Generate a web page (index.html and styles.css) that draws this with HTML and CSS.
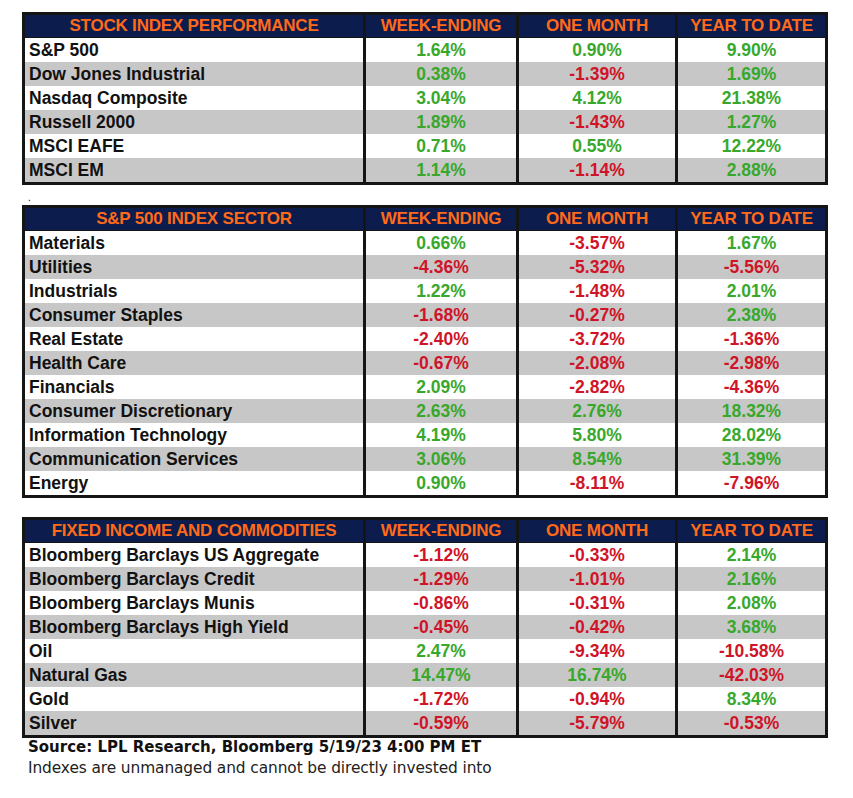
FILE: index.html
```html
<!DOCTYPE html>
<html>
<head>
<meta charset="utf-8">
<link rel="stylesheet" href="styles.css">
</head>
<body>
<div class="page">
  <table class="tbl">
    <colgroup><col class="c1"><col class="c2"><col class="c3"><col class="c4"></colgroup>
    <thead>
      <tr><th>STOCK INDEX PERFORMANCE</th><th>WEEK-ENDING</th><th>ONE MONTH</th><th>YEAR TO DATE</th></tr>
    </thead>
    <tbody>
      <tr><td>S&amp;P 500</td><td class="up">1.64%</td><td class="up">0.90%</td><td class="up">9.90%</td></tr>
      <tr><td>Dow Jones Industrial</td><td class="up">0.38%</td><td class="dn">-1.39%</td><td class="up">1.69%</td></tr>
      <tr><td>Nasdaq Composite</td><td class="up">3.04%</td><td class="up">4.12%</td><td class="up">21.38%</td></tr>
      <tr><td>Russell 2000</td><td class="up">1.89%</td><td class="dn">-1.43%</td><td class="up">1.27%</td></tr>
      <tr><td>MSCI EAFE</td><td class="up">0.71%</td><td class="up">0.55%</td><td class="up">12.22%</td></tr>
      <tr><td>MSCI EM</td><td class="up">1.14%</td><td class="dn">-1.14%</td><td class="up">2.88%</td></tr>
    </tbody>
  </table>
  <div class="dot">.</div>
  <table class="tbl">
    <colgroup><col class="c1"><col class="c2"><col class="c3"><col class="c4"></colgroup>
    <thead>
      <tr><th>S&amp;P 500 INDEX SECTOR</th><th>WEEK-ENDING</th><th>ONE MONTH</th><th>YEAR TO DATE</th></tr>
    </thead>
    <tbody>
      <tr><td>Materials</td><td class="up">0.66%</td><td class="dn">-3.57%</td><td class="up">1.67%</td></tr>
      <tr><td>Utilities</td><td class="dn">-4.36%</td><td class="dn">-5.32%</td><td class="dn">-5.56%</td></tr>
      <tr><td>Industrials</td><td class="up">1.22%</td><td class="dn">-1.48%</td><td class="up">2.01%</td></tr>
      <tr><td>Consumer Staples</td><td class="dn">-1.68%</td><td class="dn">-0.27%</td><td class="up">2.38%</td></tr>
      <tr><td>Real Estate</td><td class="dn">-2.40%</td><td class="dn">-3.72%</td><td class="dn">-1.36%</td></tr>
      <tr><td>Health Care</td><td class="dn">-0.67%</td><td class="dn">-2.08%</td><td class="dn">-2.98%</td></tr>
      <tr><td>Financials</td><td class="up">2.09%</td><td class="dn">-2.82%</td><td class="dn">-4.36%</td></tr>
      <tr><td>Consumer Discretionary</td><td class="up">2.63%</td><td class="up">2.76%</td><td class="up">18.32%</td></tr>
      <tr><td>Information Technology</td><td class="up">4.19%</td><td class="up">5.80%</td><td class="up">28.02%</td></tr>
      <tr><td>Communication Services</td><td class="up">3.06%</td><td class="up">8.54%</td><td class="up">31.39%</td></tr>
      <tr><td>Energy</td><td class="up">0.90%</td><td class="dn">-8.11%</td><td class="dn">-7.96%</td></tr>
    </tbody>
  </table>
  <div class="spacer"></div>
  <table class="tbl">
    <colgroup><col class="c1"><col class="c2"><col class="c3"><col class="c4"></colgroup>
    <thead>
      <tr><th>FIXED INCOME AND COMMODITIES</th><th>WEEK-ENDING</th><th>ONE MONTH</th><th>YEAR TO DATE</th></tr>
    </thead>
    <tbody>
      <tr><td>Bloomberg Barclays US Aggregate</td><td class="dn">-1.12%</td><td class="dn">-0.33%</td><td class="up">2.14%</td></tr>
      <tr><td>Bloomberg Barclays Credit</td><td class="dn">-1.29%</td><td class="dn">-1.01%</td><td class="up">2.16%</td></tr>
      <tr><td>Bloomberg Barclays Munis</td><td class="dn">-0.86%</td><td class="dn">-0.31%</td><td class="up">2.08%</td></tr>
      <tr><td>Bloomberg Barclays High Yield</td><td class="dn">-0.45%</td><td class="dn">-0.42%</td><td class="up">3.68%</td></tr>
      <tr><td>Oil</td><td class="up">2.47%</td><td class="dn">-9.34%</td><td class="dn">-10.58%</td></tr>
      <tr><td>Natural Gas</td><td class="up">14.47%</td><td class="up">16.74%</td><td class="dn">-42.03%</td></tr>
      <tr><td>Gold</td><td class="dn">-1.72%</td><td class="dn">-0.94%</td><td class="up">8.34%</td></tr>
      <tr><td>Silver</td><td class="dn">-0.59%</td><td class="dn">-5.79%</td><td class="dn">-0.53%</td></tr>
    </tbody>
  </table>
  <div class="source">Source: LPL Research, Bloomberg 5/19/23 4:00 PM ET</div>
  <div class="note">Indexes are unmanaged and cannot be directly invested into</div>
</div>
</body>
</html>
```
FILE: styles.css
```css
html, body {
  margin: 0;
  padding: 0;
  background: #ffffff;
}
.page {
  padding: 12px 0 0 22px;
  font-family: "Liberation Sans", Arial, sans-serif;
}
.tbl {
  border-collapse: separate;
  border-spacing: 0;
  table-layout: fixed;
  width: 806px;
  border: 3px solid #151515;
}
.c1 { width: 341px; }
.c2 { width: 153px; }
.c3 { width: 159px; }
.c4 { width: 147px; }
.tbl th {
  background: #0c1c4c;
  color: #ff6a1a;
  font-size: 17px;
  font-weight: bold;
  height: 22px;
  line-height: 22px;
  padding: 0;
  text-align: center;
  border-right: 3px solid #151515;
  border-bottom: 1px solid #151515;
  white-space: nowrap;
  letter-spacing: -0.2px;
}
.tbl th:last-child,
.tbl td:last-child {
  border-right: none;
}
.tbl td {
  height: 24px;
  line-height: 24px;
  padding: 0;
  font-size: 17.5px;
  font-weight: bold;
  color: #111;
  text-align: center;
  border-right: 3px solid #151515;
  white-space: nowrap;
}
.tbl td:first-child {
  text-align: left;
  padding-left: 4px;
}
.tbl tbody tr:nth-child(even) td {
  background: #c8c7c7;
}
.tbl td.up { color: #38a82c; }
.tbl td.dn { color: #cf1428; }
.dot {
  height: 20px;
  line-height: 26px;
  font-size: 10px;
  padding-left: 6px;
  font-family: "Liberation Sans", Arial, sans-serif;
}
.spacer {
  height: 19px;
}
.source {
  font-family: "DejaVu Sans", Verdana, sans-serif;
  font-weight: bold;
  font-size: 15px;
  line-height: 19px;
  color: #111;
  padding-left: 6px;
}
.note {
  font-family: "DejaVu Sans", Verdana, sans-serif;
  font-size: 15.4px;
  line-height: 22px;
  color: #222;
  padding-left: 6px;
  letter-spacing: -0.1px;
}
```
